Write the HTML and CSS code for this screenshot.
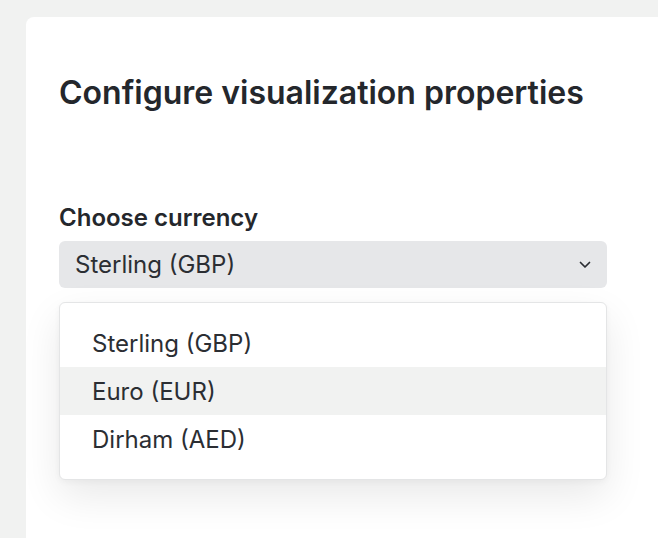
FILE: index.html
```html
<!DOCTYPE html>
<html>
<head>
<meta charset="utf-8">
<link rel="stylesheet" href="styles.css">
</head>
<body>
<div class="page">
  <div class="card">
    <h1 class="title">Configure visualization properties</h1>
    <div class="field">
      <label class="label">Choose currency</label>
      <div class="select">
        <span class="select-value">Sterling (GBP)</span>
        <svg class="chevron" width="12" height="8" viewBox="0 0 12 8"><path d="M1.5 1.5 L6 6 L10.5 1.5" fill="none" stroke="#2a2d32" stroke-width="1.7" stroke-linecap="round" stroke-linejoin="round"/></svg>
      </div>
      <ul class="menu">
        <li class="option">Sterling (GBP)</li>
        <li class="option active">Euro (EUR)</li>
        <li class="option">Dirham (AED)</li>
      </ul>
    </div>
  </div>
</div>
</body>
</html>
```

FILE: styles.css
```css
html, body {
  margin: 0;
  padding: 0;
  height: 100%;
  overflow: hidden;
}
body {
  background: #f1f2f1;
  font-family: Inter, "Noto Sans", sans-serif;
  color: #25282d;
}
.page {
  padding: 17px 0 0 26px;
  height: 100%;
  box-sizing: border-box;
}
.card {
  background: #ffffff;
  border-top-left-radius: 8px;
  height: 100%;
  padding: 58px 0 0 33px;
  box-sizing: border-box;
}
.title {
  margin: 0;
  font-size: 32px;
  line-height: 36px;
  font-weight: 600;
  color: #24272c;
}
.field {
  margin-top: 93px;
  width: 548px;
  display: flex;
  flex-direction: column;
}
.label {
  font-size: 24px;
  line-height: 28px;
  font-weight: 600;
  color: #24272c;
}
.select {
  margin-top: 9px;
  height: 47px;
  background: #e6e7e9;
  border-radius: 6px;
  display: flex;
  align-items: center;
  justify-content: space-between;
  padding: 0 16px;
}
.select-value {
  font-size: 24px;
  line-height: 28px;
  color: #2b2e33;
}
.menu {
  list-style: none;
  margin: 14px 0 0 0;
  padding: 16px 0;
  background: #ffffff;
  border: 1px solid #e4e5e6;
  border-radius: 6px;
  box-shadow: 0 16px 40px rgba(0, 0, 0, 0.09), 0 2px 6px rgba(0, 0, 0, 0.04);
}
.option {
  height: 48px;
  display: flex;
  align-items: center;
  padding-left: 32px;
  font-size: 24px;
  color: #2b2e33;
}
.option.active {
  background: #f1f2f1;
}
```
